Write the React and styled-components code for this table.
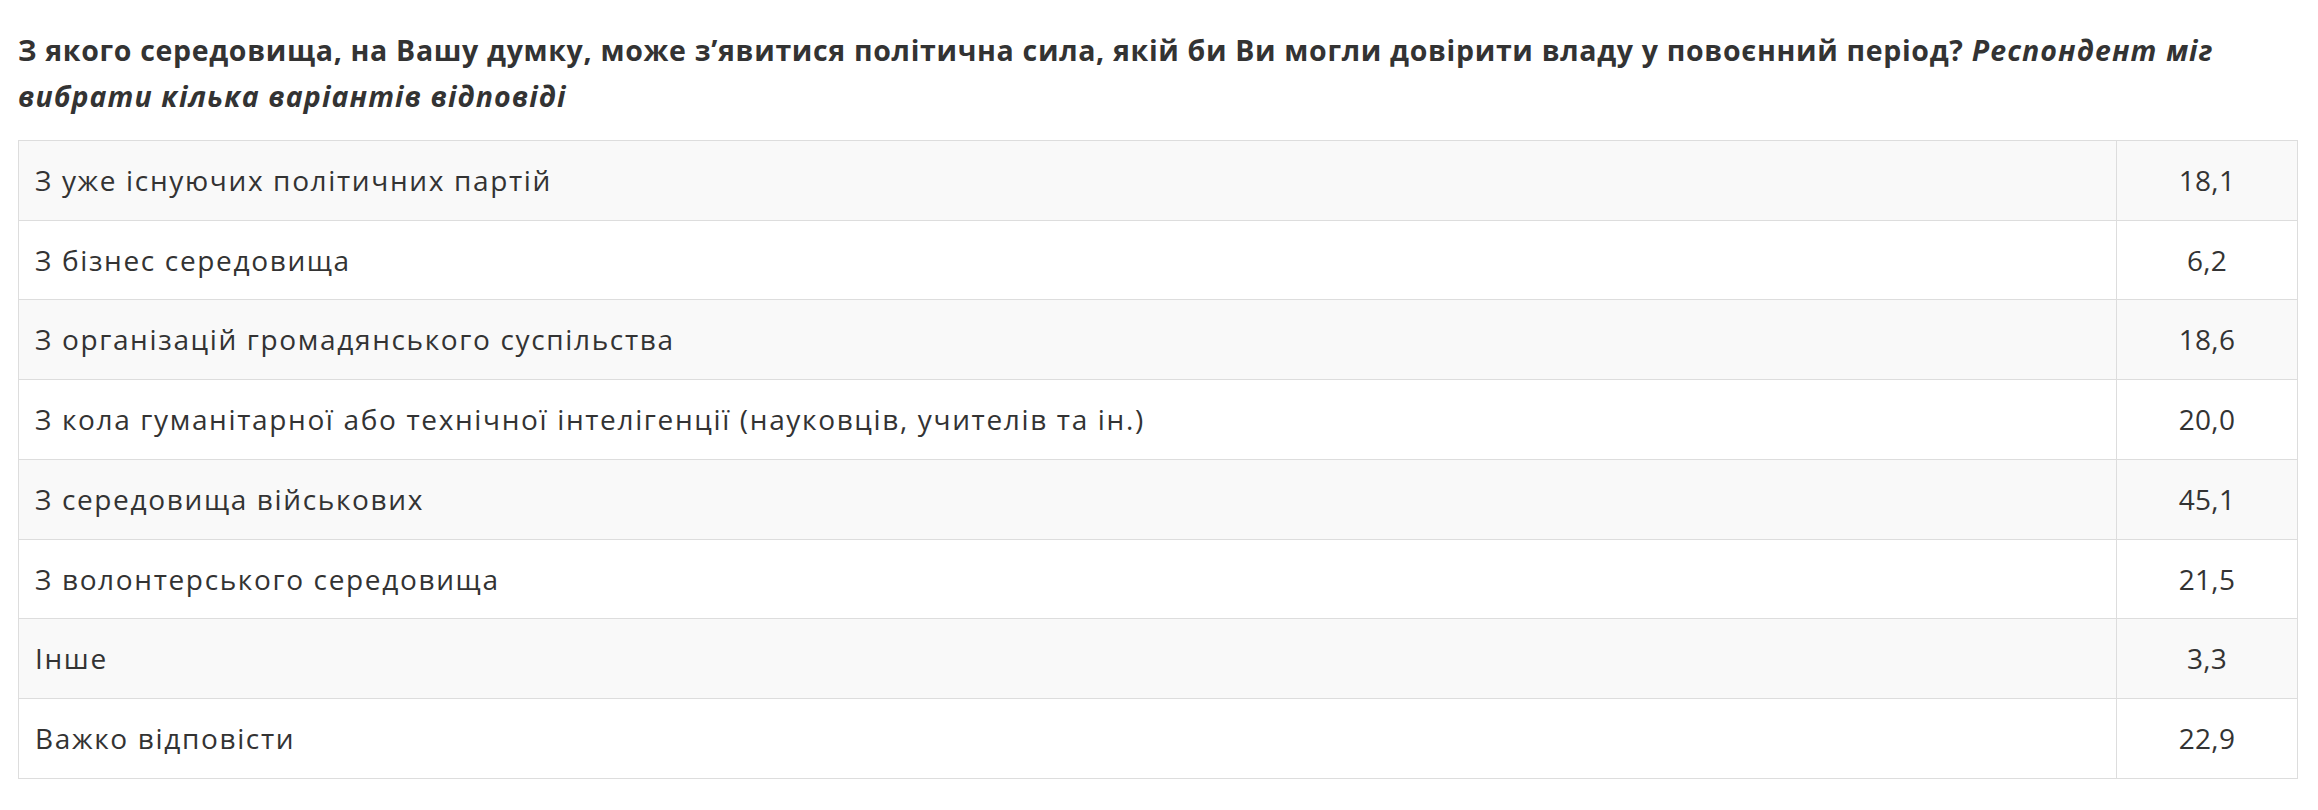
import React from 'react';
import styled, { createGlobalStyle } from 'styled-components';

const GlobalStyle = createGlobalStyle`
  body {
    margin: 8px;
    background: #ffffff;
    font-family: "Open Sans", "Liberation Sans", sans-serif;
    color: #333333;
  }
`;

const Wrapper = styled.div`
  padding: 0 12px 0 10px;
`;

const Question = styled.p`
  margin: 19px 0 21px;
  font-size: 28.5px;
  line-height: 46px;
  font-weight: 700;
  letter-spacing: 0.68px;
  color: #333333;
`;

const Note = styled.em`
  font-style: italic;
  letter-spacing: 1.1px;
`;

const Table = styled.table`
  width: 100%;
  border-collapse: collapse;
  border: 1px solid #dddddd;
`;

const Row = styled.tr`
  background: ${({ striped }) => (striped ? '#f9f9f9' : '#ffffff')};
`;

const Cell = styled.td`
  border: 1px solid #dddddd;
  padding: 20px 16px;
  font-size: 28px;
  line-height: 38.7px;
  letter-spacing: ${({ numeric }) => (numeric ? '0.3px' : '1.65px')};
  color: #333333;
  text-align: ${({ numeric }) => (numeric ? 'center' : 'left')};
  width: ${({ numeric }) => (numeric ? '148px' : 'auto')};
`;

const rows = [
  ['З уже існуючих політичних партій', '18,1'],
  ['З бізнес середовища', '6,2'],
  ['З організацій громадянського суспільства', '18,6'],
  ['З кола гуманітарної або технічної інтелігенції (науковців, учителів та ін.)', '20,0'],
  ['З середовища військових', '45,1'],
  ['З волонтерського середовища', '21,5'],
  ['Інше', '3,3'],
  ['Важко відповісти', '22,9'],
];

export default function App() {
  return (
    <Wrapper>
      <GlobalStyle />
      <Question>
        З якого середовища, на Вашу думку, може з’явитися політична сила, якій би Ви могли довірити владу у повоєнний період?{' '}
        <Note>Респондент міг вибрати кілька варіантів відповіді</Note>
      </Question>
      <Table>
        <tbody>
          {rows.map(([label, value], i) => (
            <Row key={label} striped={i % 2 === 0}>
              <Cell>{label}</Cell>
              <Cell numeric>{value}</Cell>
            </Row>
          ))}
        </tbody>
      </Table>
    </Wrapper>
  );
}
